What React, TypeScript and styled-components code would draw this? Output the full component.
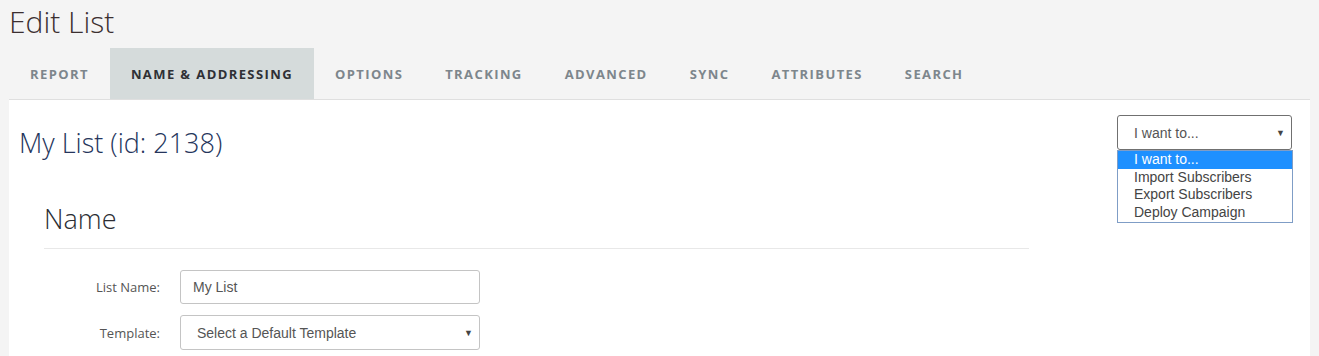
import React from 'react';
import styled, {createGlobalStyle} from "styled-components";

const GlobalStyle = createGlobalStyle`
  body {
    margin: 0;
    background: #f4f4f4;
    font-family: "Open Sans", "Liberation Sans", sans-serif;
  }
`

const tabs = ["Report", "Name & Addressing", "Options", "Tracking", "Advanced", "Sync", "Attributes", "Search"]
const actions = ["I want to...", "Import Subscribers", "Export Subscribers", "Deploy Campaign"]

export default function App() {
    return (
        <Page>
            <GlobalStyle/>
            <PageTitle>Edit List</PageTitle>

            <TabBar>
                {tabs.map(t => (
                    <Tab key={t} $active={t === "Name & Addressing"}>{t}</Tab>
                ))}
            </TabBar>

            <Panel>
                <PanelHead>
                    <ListTitle>My List (id: 2138)</ListTitle>

                    <ActionMenu>
                        <FakeSelect $width={175}>
                            <span>I want to...</span>
                            <Caret>▼</Caret>
                        </FakeSelect>
                        <ListBox>
                            {actions.map((a, i) => (
                                <Option key={a} $selected={i === 0}>{a}</Option>
                            ))}
                        </ListBox>
                    </ActionMenu>
                </PanelHead>

                <Section>
                    <SectionTitle>Name</SectionTitle>

                    <FormRow>
                        <Label>List Name:</Label>
                        <TextInput defaultValue="My List"/>
                    </FormRow>

                    <FormRow>
                        <Label>Template:</Label>
                        <FakeSelect $width={300} $pad={16}>
                            <span>Select a Default Template</span>
                            <Caret>▼</Caret>
                        </FakeSelect>
                    </FormRow>
                </Section>
            </Panel>
        </Page>
    );
}

const Page = styled.div`
  min-height: 356px;
`

const PageTitle = styled.h1`
  margin: 0;
  padding: 0 0 0 9px;
  height: 48px;
  line-height: 44px;
  font-size: 30px;
  font-weight: 300;
  color: #3b2f30;
`

const TabBar = styled.div`
  display: flex;
  padding-left: 9px;
  height: 51px;
`

const Tab = styled.div<{ $active?: boolean }>`
  display: flex;
  align-items: center;
  padding: 0 21px;
  font-family: "Open Sans", "DejaVu Sans", sans-serif;
  font-size: 13px;
  font-weight: 700;
  letter-spacing: 1.4px;
  text-transform: uppercase;
  color: ${p => p.$active ? "#2f3035" : "#7d868c"};
  background: ${p => p.$active ? "#d5dbdb" : "transparent"};
`

const Panel = styled.div`
  margin: 0 9px;
  background: #fff;
  border-top: 1px solid #dfdfdf;
  padding: 0 10px;
  min-height: 256px;
`

const PanelHead = styled.div`
  display: flex;
  justify-content: space-between;
  align-items: flex-start;
  padding-right: 8px;
`

const ListTitle = styled.h2`
  margin: 25px 0 0;
  font-size: 27px;
  line-height: 36px;
  font-weight: 300;
  color: #25355c;
`

const ActionMenu = styled.div`
  position: relative;
  margin-top: 15px;
  width: 175px;
`

const FakeSelect = styled.div<{ $width: number; $pad?: number }>`
  box-sizing: border-box;
  width: ${p => p.$width}px;
  height: 35px;
  display: flex;
  align-items: center;
  justify-content: space-between;
  padding: 0 6px 0 ${p => p.$pad ?? 16}px;
  background: #fff;
  border: 1px solid ${p => p.$width === 175 ? "#707070" : "#c4c4c4"};
  border-radius: 3px;
  font-family: "Liberation Sans", Arial, sans-serif;
  font-size: 14px;
  color: #555;
`

const Caret = styled.span`
  font-size: 9px;
  color: #444;
`

const ListBox = styled.div`
  position: absolute;
  top: 35px;
  left: 0;
  width: 176px;
  box-sizing: border-box;
  border: 1px solid #7f9dc6;
  background: #fff;
  padding-bottom: 1px;
`

const Option = styled.div<{ $selected?: boolean }>`
  height: 17.5px;
  line-height: 17px;
  padding-left: 16px;
  font-family: "Liberation Sans", Arial, sans-serif;
  font-size: 14px;
  color: ${p => p.$selected ? "#fff" : "#444"};
  background: ${p => p.$selected ? "#1e90ff" : "transparent"};
`

const Section = styled.div`
  padding: 0 0 0 25px;
  width: 985px;
`

const SectionTitle = styled.h3`
  margin: 40px 0 0;
  padding-bottom: 11px;
  font-size: 27px;
  line-height: 36px;
  font-weight: 300;
  color: #2b2d33;
  border-bottom: 1px solid #e8e8e8;
  margin-bottom: 21px;
`

const FormRow = styled.div`
  display: flex;
  align-items: center;
  gap: 20px;
  margin-bottom: 11px;
`

const Label = styled.label`
  width: 116px;
  text-align: right;
  font-size: 13px;
  color: #555;
`

const TextInput = styled.input`
  box-sizing: border-box;
  width: 300px;
  height: 34px;
  padding: 0 12px;
  border: 1px solid #c4c4c4;
  border-radius: 3px;
  font-family: "Liberation Sans", Arial, sans-serif;
  font-size: 14px;
  color: #555;
  outline: none;
`
